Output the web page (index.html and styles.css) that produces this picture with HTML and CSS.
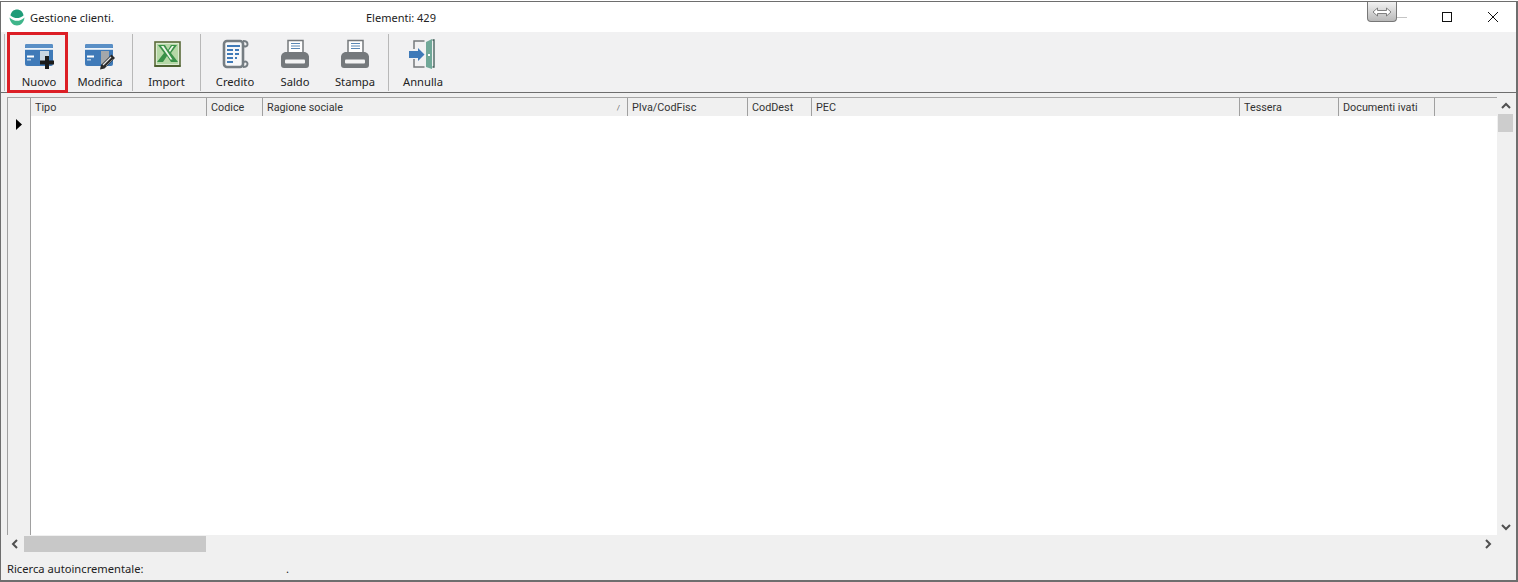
FILE: index.html
```html
<!DOCTYPE html>
<html lang="it">
<head>
<meta charset="utf-8">
<title>Gestione clienti.</title>
<link rel="stylesheet" href="styles.css">
</head>
<body>
<div class="window">
  <header class="titlebar">
    <svg class="app-icon" width="16" height="17" viewBox="0 0 16 17">
      <path d="M1.500 6.500C2 2.500 5 .5 8 .5s6 2 6.500 6C12 8.500 10 9 8 9S4 8.500 1.500 6.500z" fill="#1f9c78"/>
      <path d="M.5 8.500C3 11 5.500 11.800 8 11.800s5-.8 7.500-3.300C15 13 12 16.500 8 16.500S1 13 .5 8.500z" fill="#3fb58a"/>
    </svg>
    <span class="title">Gestione clienti.</span>
    <span class="count">Elementi: 429</span>
    <div class="caption">
      <svg class="cap-btn" width="12" height="12" viewBox="0 0 12 12"><rect x="1.500" y="1.500" width="9" height="9" fill="none" stroke="#111" stroke-width="1"/></svg>
      <svg class="cap-btn" width="12" height="12" viewBox="0 0 12 12"><path d="M1 1l10 10M11 1L1 11" stroke="#111" stroke-width="1" fill="none"/></svg>
    </div>
    <div class="resize-tab">
      <svg width="20" height="10" viewBox="0 0 20 10"><path d="M1 5l4.500-4v2.500h9V1l4.500 4-4.500 4V6.500h-9V9z" fill="#fff" stroke="#666" stroke-width=".8"/></svg>
    </div>
    <div class="resize-line"></div>
  </header>

  <nav class="toolbar">
    <div class="sep sep-first"></div>
    <button class="tool tool-nuovo">
      <svg class="ico" width="32" height="30" viewBox="0 0 32 30">
        <rect x="2" y="5" width="28" height="22" rx="2" fill="#3f7ab8"/>
        <rect x="2" y="5" width="28" height="4" rx="1.500" fill="#5a8fc6"/>
        <rect x="2" y="9" width="28" height="1.800" fill="#eef4fa"/>
        <rect x="4" y="16.500" width="7" height="2" fill="#fff"/>
        <rect x="4" y="20" width="4" height="1.600" fill="#a9c6e2"/>
        <rect x="17" y="12" width="9" height="10" fill="#c9d6e2"/>
        <path d="M22 17h4v4.500h5v4h-5V30h-4v-4.500h-5v-4h5z" fill="#1c1c1c"/>
      </svg>
      <span>Nuovo</span>
    </button>
    <button class="tool tool-mod">
      <svg class="ico" width="32" height="30" viewBox="0 0 32 30">
        <rect x="1" y="5" width="28" height="22" rx="2" fill="#3f7ab8"/>
        <rect x="1" y="5" width="28" height="4" rx="1.500" fill="#5a8fc6"/>
        <rect x="1" y="9" width="28" height="1.800" fill="#eef4fa"/>
        <rect x="3" y="16.500" width="7" height="2" fill="#fff"/>
        <rect x="3" y="20" width="4" height="1.600" fill="#a9c6e2"/>
        <rect x="17" y="12" width="8" height="13" fill="#a3a7ab"/>
        <path d="M16 30.500l1-4.500L27.500 15.500l3.500 3.500L20.500 29.500z" fill="#2a2a2a"/>
        <path d="M19 26l8-8" stroke="#e6e6e6" stroke-width="1.200"/>
        <path d="M22 27l6.500-6.500" stroke="#9a9a9a" stroke-width=".8"/>
      </svg>
      <span>Modifica</span>
    </button>
    <div class="sep"></div>
    <button class="tool tool-import">
      <svg class="ico" width="32" height="30" viewBox="0 0 32 30">
        <rect x="4" y="3" width="25" height="24" fill="#dcebd2" stroke="#5b6b3a" stroke-width="1.600"/>
        <rect x="6" y="5" width="21" height="20" fill="#b5d8a6"/>
        <path d="M7 6h7l3 5 3-5h6l-6 8 7 9h-7l-4-6-4 6H6l7-9z" fill="#3a9148"/>
        <path d="M10 7h2.500l5 7.500 4 6h-2l-4.500-6.500zM21 7h2l-4 6-1.200-1.500z" fill="#eef6e8"/>
        <rect x="3.500" y="26" width="26" height="2" fill="#4d6131"/>
      </svg>
      <span>Import</span>
    </button>
    <div class="sep"></div>
    <button class="tool tool-credito">
      <svg class="ico" width="32" height="30" viewBox="0 0 32 30">
        <rect x="5" y="2" width="19" height="26" rx="3" fill="#f7f8f9" stroke="#757d82" stroke-width="2.600"/>
        <path d="M24 2c3 0 4.500 1.200 4.500 3.200S27 8 25 7M24 28c3 0 4.500-1.200 4.500-3.200S27 22 25 23" fill="none" stroke="#757d82" stroke-width="2"/>
        <path d="M8 7h13" stroke="#3f7ab8" stroke-width="2"/>
        <path d="M8 11h6M16 11h4M8 15h6M16 15h4M8 19h6M16 19h2M8 23h6" stroke="#3f7ab8" stroke-width="1.800"/>
      </svg>
      <span>Credito</span>
    </button>
    <button class="tool">
      <svg class="ico" width="32" height="30" viewBox="0 0 32 30">
        <rect x="9" y="1.500" width="15" height="13" fill="#fff" stroke="#75797c" stroke-width="1.500"/>
        <path d="M12 4.500h9M12 7h9M12 9.500h9" stroke="#5b88b5" stroke-width="1"/>
        <path d="M7 13h18c3 0 5 2.500 5 5v8a3 3 0 0 1-3 3H5a3 3 0 0 1-3-3v-8c0-2.500 2-5 5-5z" fill="#75797c"/>
        <rect x="6" y="20.500" width="20" height="4" rx="1" fill="#f4f4f4"/>
      </svg>
      <span>Saldo</span>
    </button>
    <button class="tool">
      <svg class="ico" width="32" height="30" viewBox="0 0 32 30">
        <rect x="9" y="1.500" width="15" height="13" fill="#fff" stroke="#75797c" stroke-width="1.500"/>
        <path d="M12 4.500h9M12 7h9M12 9.500h9" stroke="#5b88b5" stroke-width="1"/>
        <path d="M7 13h18c3 0 5 2.500 5 5v8a3 3 0 0 1-3 3H5a3 3 0 0 1-3-3v-8c0-2.500 2-5 5-5z" fill="#75797c"/>
        <rect x="6" y="20.500" width="20" height="4" rx="1" fill="#f4f4f4"/>
      </svg>
      <span>Stampa</span>
    </button>
    <div class="sep sep-last"></div>
    <button class="tool tool-annulla">
      <svg class="ico" width="32" height="30" viewBox="0 0 32 30">
        <path d="M7 10V2h10.500M7 20v8h10.500" fill="none" stroke="#75797c" stroke-width="1.500"/>
        <path d="M19 3l6-3v30l-6-2z" fill="#70a898"/>
        <path d="M25.500 1h1.500v27h-1.500" fill="none" stroke="#3d5b55" stroke-width="1.300"/>
        <rect x="21" y="15" width="2" height="2" fill="#fff"/>
        <path d="M2 12h9V9l6.500 6.500L11 22v-3H2z" fill="#3f7ab8"/>
      </svg>
      <span>Annulla</span>
    </button>
  </nav>

  <main class="grid-wrap">
    <div class="grid-main">
      <div class="grid-body">
        <div class="indicator">
          <div class="corner"></div>
          <div class="row-mark"><svg width="8" height="11" viewBox="0 0 8 11"><path d="M1 0l6 5.500L1 11z" fill="#000"/></svg></div>
        </div>
        <div class="cells">
          <div class="head">
            <div class="col col-tipo">Tipo</div>
            <div class="col col-cod">Codice</div>
            <div class="col col-rag">Ragione sociale<i class="sort">/</i></div>
            <div class="col col-piva">PIva/CodFisc</div>
            <div class="col col-dest">CodDest</div>
            <div class="col col-pec">PEC</div>
            <div class="col col-tess">Tessera</div>
            <div class="col col-doc">Documenti ivati</div>
          </div>
        </div>
      </div>
      <div class="hscroll">
        <svg class="arrow" width="16" height="16" viewBox="0 0 16 16"><path d="M10 4L6 8l4 4" fill="none" stroke="#505050" stroke-width="2"/></svg>
        <div class="hthumb"></div>
        <svg class="arrow arrow-end" width="16" height="16" viewBox="0 0 16 16"><path d="M6 4l4 4-4 4" fill="none" stroke="#505050" stroke-width="2"/></svg>
      </div>
    </div>
    <div class="vscroll">
      <svg class="arrow" width="16" height="16" viewBox="0 0 16 16"><path d="M4 10l4-4 4 4" fill="none" stroke="#505050" stroke-width="2"/></svg>
      <div class="vthumb"></div>
      <svg class="arrow arrow-end" width="16" height="16" viewBox="0 0 16 16"><path d="M4 6l4 4 4-4" fill="none" stroke="#505050" stroke-width="2"/></svg>
    </div>
  </main>

  <footer class="status">
    <span class="status-label">Ricerca autoincrementale:</span>
    <span class="status-dot">.</span>
  </footer>
</div>
</body>
</html>
```
FILE: styles.css
```css
* { box-sizing: border-box; }
html, body { margin: 0; padding: 0; background: #fff; }
body {
  width: 1518px;
  height: 582px;
  overflow: hidden;
  padding-top: 1px;
  font-family: "Noto Sans", "Open Sans", sans-serif;
  font-size: 11.2px;
  color: #222;
}
.window {
  position: relative;
  height: 581px;
  display: flex;
  flex-direction: column;
  border: 1px solid #6e6e6e;
  border-width: 1px 2px 2px 1px;
  background: #f0f0f0;
}
.titlebar {
  position: relative;
  height: 30px;
  flex: none;
  background: #fff;
  display: flex;
  align-items: center;
  padding-left: 8px;
}
.app-icon { flex: none; margin-right: 5px; }
.title { width: 336px; }
.count { font-size: 11px; }
.caption {
  margin-left: auto;
  display: flex;
  gap: 34px;
  padding-right: 17px;
}
.resize-tab {
  position: absolute;
  left: 1366px;
  top: 0;
  width: 30px;
  height: 20px;
  border: 1px solid #777;
  border-top: 0;
  border-radius: 0 0 4px 4px;
  background: linear-gradient(#f2f2f2, #b9b9b9);
  display: flex;
  align-items: center;
  justify-content: center;
}
.resize-line {
  position: absolute;
  left: 1396px;
  top: 15px;
  width: 10px;
  height: 1px;
  background: #c4c4c4;
}
.toolbar {
  flex: none;
  height: 61px;
  display: flex;
  align-items: stretch;
  padding-left: 3px;
  background: #f1f1f2;
  border-bottom: 1px solid #6e6e6e;
}
.sep {
  flex: none;
  width: 1px;
  margin: 2px 0 1px;
  background: #b8b8b8;
}
.sep-last { margin-left: 3px; }
.tool {
  flex: none;
  width: 60px;
  padding: 7px 0 0;
  border: 0;
  background: transparent;
  display: flex;
  flex-direction: column;
  align-items: center;
  gap: 5px;
  font: inherit;
  color: #222;
}
.tool span { line-height: 16px; }
.tool .ico { display: block; overflow: visible; }
.tool-nuovo {
  margin-left: 2px;
  margin-bottom: -1px;
  width: 61px;
  border: 3px solid #dc1f26;
  padding: 4px 0 0 3px;
}
.tool-mod { width: 64px; }
.tool-import { width: 67px; }
.tool-credito { margin-left: 4px; }
.tool-annulla { margin-left: 4px; }
.grid-wrap {
  flex: 1;
  display: flex;
  padding: 4px 0 0 6px;
  min-height: 0;
}
.grid-main {
  flex: 1;
  min-width: 0;
  display: flex;
  flex-direction: column;
}
.grid-body {
  flex: 1;
  display: flex;
  min-height: 0;
  background: #fff;
  border-top: 1px solid #a5a5a5;
}
.indicator {
  flex: none;
  width: 24px;
  background: #f0f0f0;
  border-left: 1px solid #a0a0a0;
  border-right: 1px solid #a0a0a0;
}
.corner { height: 18px; }
.row-mark {
  height: 16px;
  display: flex;
  align-items: center;
  justify-content: center;
  background: #f0f0f0;
}
.cells { flex: 1; min-width: 0; }
.head {
  display: flex;
  height: 18px;
  background: #f0f0f0;
}
.col {
  position: relative;
  flex: none;
  padding: 0 0 0 4px;
  font-family: Roboto, "Noto Sans", sans-serif;
  font-size: 10.8px;
  line-height: 20px;
  color: #333;
  border-right: 1px solid #a0a0a0;
  white-space: nowrap;
}
.col-tipo { width: 176px; }
.col-cod { width: 56px; }
.col-rag { width: 365px; }
.col-piva { width: 120px; }
.col-dest { width: 64px; }
.col-pec { width: 428px; }
.col-tess { width: 99px; }
.col-doc { width: 96px; }
.sort {
  position: absolute;
  right: 7px;
  top: 0;
  font-size: 8px;
  font-style: normal;
  color: #666;
}
.hscroll {
  flex: none;
  height: 18px;
  display: flex;
  align-items: center;
  background: #f0f0f0;
}
.hscroll .arrow { flex: none; }
.hthumb {
  width: 182px;
  height: 16px;
  margin-left: 1px;
  background: #c8c8c8;
}
.arrow-end { margin-left: auto; }
.hscroll .arrow-end { margin-left: auto; margin-right: 1px; }
.vscroll {
  flex: none;
  width: 17px;
  margin-right: 2px;
  display: flex;
  flex-direction: column;
  align-items: center;
  background: #f0f0f0;
}
.vscroll .arrow { flex: none; margin-top: 1px; }
.vthumb {
  width: 15px;
  height: 18px;
  background: #cdcdcd;
}
.vscroll .arrow-end { margin-top: auto; margin-bottom: 18px; }
.status {
  flex: none;
  height: 27px;
  display: flex;
  align-items: center;
  padding: 3px 0 0 6px;
  background: #f0f0f0;
}
.status-label { width: 279px; }
```
